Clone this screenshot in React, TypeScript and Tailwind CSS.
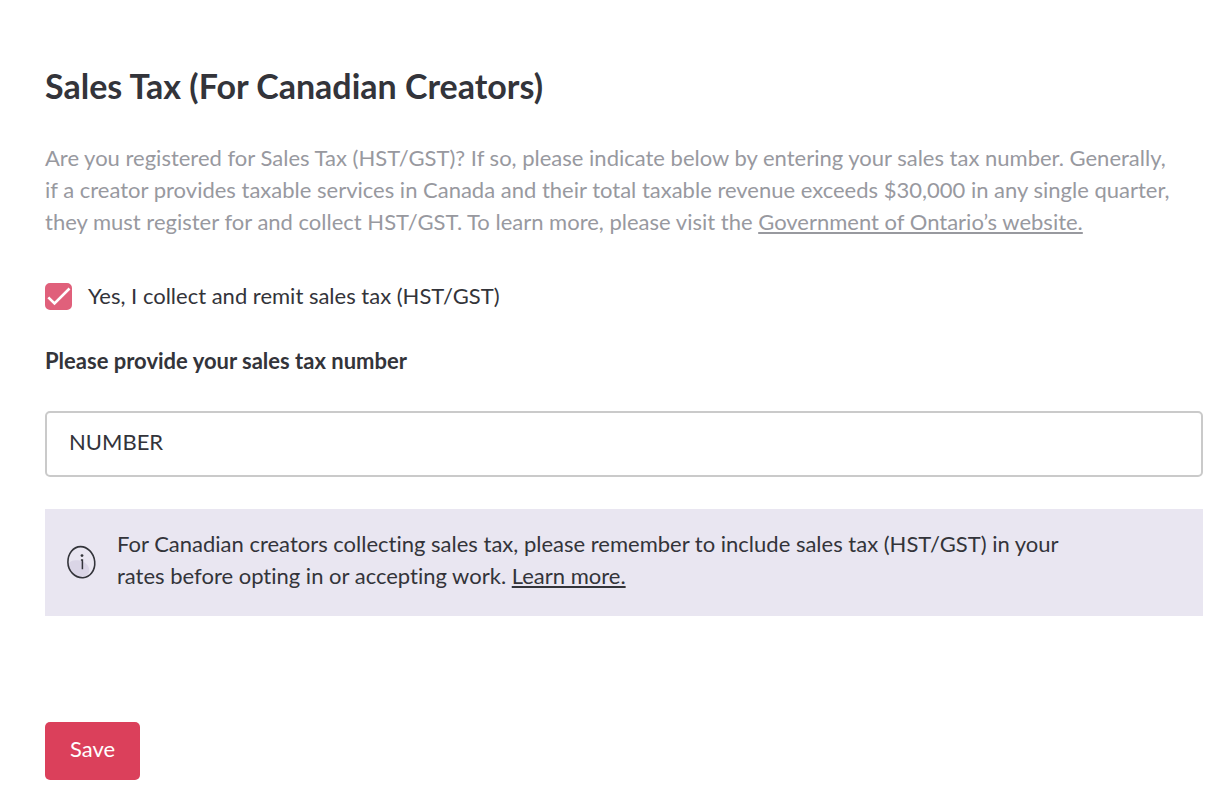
import { useState } from "react";

function InfoIcon() {
  return (
    <svg className="h-9 w-8 shrink-0" viewBox="0 0 32 36" fill="none" aria-hidden="true">
      <path d="M3 18.500C4 15.500 8 15 12 15.200C17 15.500 22.500 19 23.200 24C24 28.500 21 30.500 17 32C9 32.500 2.500 26.500 3 18.500Z" fill="#dad5e6" />
      <path
        d="M14.500 1.600C21 1.500 27.800 7.500 28.700 16.500C29.500 25.500 24 32.300 17 32.700C9 33.100 2 26 1.900 17.300C1.800 8.500 7.200 1.800 14.500 1.600Z"
        stroke="#33343a"
        strokeWidth="1.600"
      />
      <circle cx="16" cy="10.600" r="1.400" fill="#33343a" />
      <path d="M14.900 14.900H16.400V24.300" stroke="#33343a" strokeWidth="1.500" />
    </svg>
  );
}

export default function App() {
  const [collects, setCollects] = useState(true);
  const [taxNumber, setTaxNumber] = useState("NUMBER");

  return (
    <main className="bg-white pt-[66px] pr-[23px] pb-2 pl-[45px] font-['Lato',sans-serif] text-[22px] leading-8 text-[#33343a] [font-variant-ligatures:none]">
      <form onSubmit={(event) => event.preventDefault()}>
        <h1 className="text-[34px] leading-10 font-bold">Sales Tax (For Canadian Creators)</h1>

        <p className="mt-9 text-[#98999f]">
          Are you registered for Sales Tax (HST/GST)? If so, please indicate below by entering your sales tax number. Generally,
          <br />
          if a creator provides taxable services in Canada and their total taxable revenue exceeds $30,000 in any single quarter,
          <br />
          they must register for and collect HST/GST. To learn more, please visit the{" "}
          <a href="#ontario" className="underline decoration-2 underline-offset-2">
            Government of Ontario’s website.
          </a>
        </p>

        <label className="mt-[42px] flex items-center gap-4">
          <span className="grid size-[27px] shrink-0">
            <input
              type="checkbox"
              checked={collects}
              onChange={(event) => setCollects(event.target.checked)}
              className="peer col-start-1 row-start-1 size-[27px] appearance-none rounded-[5px] border-2 border-[#c8c8c8] checked:border-[#e0607b] checked:bg-[#e0607b]"
            />
            <svg
              className="pointer-events-none invisible col-start-1 row-start-1 size-[27px] peer-checked:visible"
              viewBox="0 0 27 27"
              fill="none"
              aria-hidden="true"
            >
              <path d="M3.300 14.300L9.500 20.500L24.500 5.500" stroke="#fff" strokeWidth="2.600" />
            </svg>
          </span>
          Yes, I collect and remit sales tax (HST/GST)
        </label>

        <label htmlFor="tax-number" className="mt-[33px] block font-bold">
          Please provide your sales tax number
        </label>
        <input
          id="tax-number"
          type="text"
          value={taxNumber}
          onChange={(event) => setTaxNumber(event.target.value)}
          className="mt-[34px] block h-[66px] w-full rounded-[5px] border-2 border-[#cacaca] bg-white px-[22px] pb-1.5"
        />

        <aside className="mt-8 flex items-center gap-[19px] bg-[#e9e6f1] px-[21px]">
          <InfoIcon />
          <p className="pt-[19px] pb-6">
            For Canadian creators collecting sales tax, please remember to include sales tax (HST/GST) in your
            <br />
            rates before opting in or accepting work.{" "}
            <a href="#learn-more" className="underline decoration-2 underline-offset-2">
              Learn more.
            </a>
          </p>
        </aside>

        <button type="submit" className="mt-[106px] block h-[58px] min-w-[95px] rounded-[5px] bg-[#db405b] px-6 pb-1 text-white">
          Save
        </button>
      </form>
    </main>
  );
}
